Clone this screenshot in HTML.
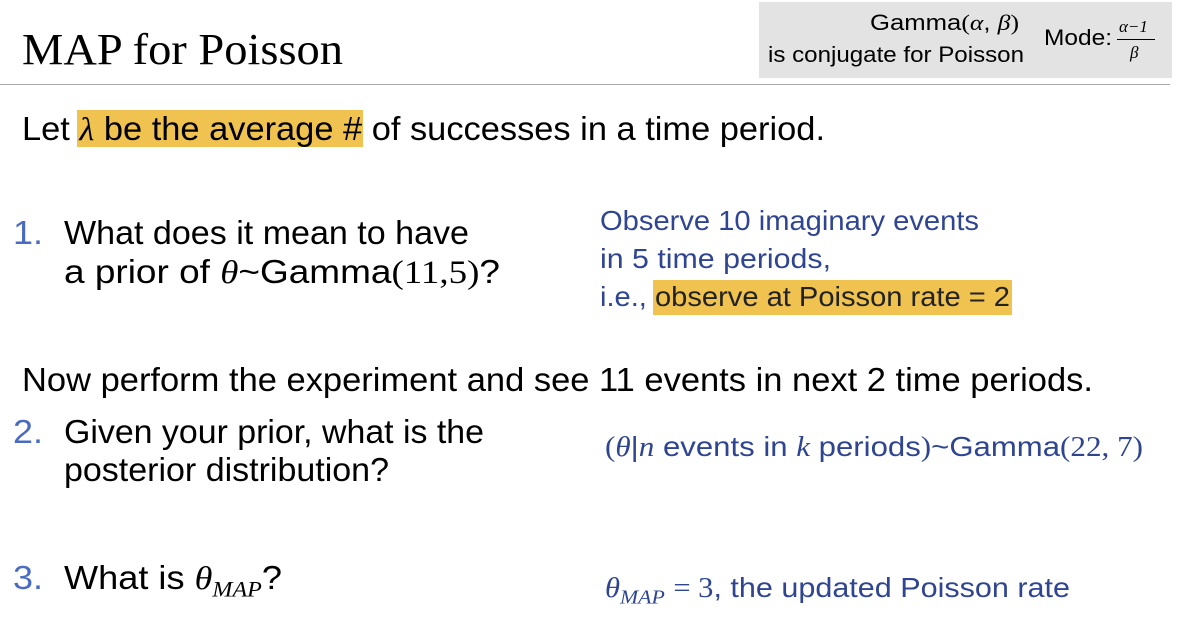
<!DOCTYPE html>
<html><head><meta charset="utf-8"><style>
body{margin:0;width:1187px;height:623px;background:#fff;position:relative;overflow:hidden;font-family:"Liberation Sans",sans-serif;color:#000}
.a{position:absolute;white-space:nowrap;transform-origin:0 50%;line-height:1}
.m{font-family:"Liberation Serif",serif;font-style:italic}
.mr{font-family:"Liberation Serif",serif}
.b{color:#2f4591}
.n{color:#4a6cc0}
.hl{background:#f0c350}
</style></head><body>
<div style="position:absolute;left:759px;top:2px;width:413px;height:76px;background:#e3e3e3"></div>
<div style="position:absolute;left:0;top:84px;width:1170px;height:1px;background:#a8a8a8"></div>
<div class="a" style="left:22px;top:28px;font-family:'Liberation Serif',serif;font-size:44px;--w:321px">MAP for Poisson</div>
<div class="a" style="left:870px;top:12px;font-size:22px;--w:149px">Gamma<span class="mr">(</span><span class="m">α</span>, <span class="m">β</span><span class="mr">)</span></div>
<div class="a" style="left:768px;top:44px;font-size:22px;--w:256px">is conjugate for Poisson</div>
<div class="a" style="left:1044px;top:27px;font-size:22px;--w:68px">Mode:</div>
<div class="a m" style="left:1119px;top:18px;font-size:17px">α−1</div>
<div style="position:absolute;left:1117px;top:39px;width:38px;height:1px;background:#000"></div>
<div class="a m" style="left:1130px;top:44px;font-size:17px">β</div>

<div class="hl" style="position:absolute;left:77px;top:110px;width:286px;height:37px"></div>
<div class="a" style="left:22px;top:112px;font-size:33px;--w:803px">Let <span class="m">λ</span> be the average # of successes in a time period.</div>

<div class="a n" style="left:13px;top:216px;font-size:33px;--w:30px">1.</div>
<div class="a" style="left:64px;top:216px;font-size:33px;--w:405px">What does it mean to have</div>
<div class="a" style="left:64px;top:255px;font-size:33px;--w:436px">a prior of <span class="m">θ</span>~Gamma<span class="mr">(11,5)</span>?</div>

<div class="a b" style="left:600px;top:207px;font-size:28px;--w:379px">Observe 10 imaginary events</div>
<div class="a b" style="left:600px;top:245px;font-size:28px;--w:231px">in 5 time periods,</div>
<div class="hl" style="position:absolute;left:653px;top:280px;width:359px;height:35px"></div>
<div class="a b" style="left:600px;top:283px;font-size:28px;--w:410px">i.e., <span style="color:#222">observe at Poisson rate = 2</span></div>

<div class="a" style="left:22px;top:363px;font-size:33px;--w:1071px">Now perform the experiment and see 11 events in next 2 time periods.</div>

<div class="a n" style="left:13px;top:415px;font-size:33px;--w:30px">2.</div>
<div class="a" style="left:64px;top:415px;font-size:33px;--w:420px">Given your prior, what is the</div>
<div class="a" style="left:64px;top:453px;font-size:33px;--w:325px">posterior distribution?</div>
<div class="a b" style="left:605px;top:433px;font-size:28px;--w:538px"><span class="mr">(</span><span class="m">θ</span>|<span class="m">n</span> events in <span class="m">k</span> periods<span class="mr">)</span>~Gamma<span class="mr">(22, 7)</span></div>

<div class="a n" style="left:13px;top:561px;font-size:33px;--w:30px">3.</div>
<div class="a" style="left:64px;top:561px;font-size:33px;--w:218px">What is <span class="m">θ<sub style="font-size:22px">MAP</sub></span>?</div>
<div class="a b" style="left:605px;top:574px;font-size:28px;--w:465px"><span class="m">θ<sub style="font-size:20px">MAP</sub></span> <span class="mr">= 3</span>, the updated Poisson rate</div>
<script>
document.querySelectorAll('.a').forEach(function(e){var w=parseFloat(getComputedStyle(e).getPropertyValue('--w'));if(w){var r=e.getBoundingClientRect().width;if(r)e.style.transform='scaleX('+(w/r)+')';}});
</script>
</body></html>
